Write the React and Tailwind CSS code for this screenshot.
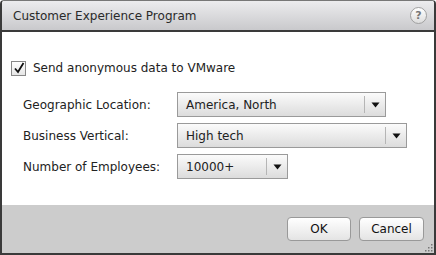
import React from "react";

const font = { fontFamily: '"DejaVu Sans", Verdana, sans-serif' };

const Select = ({ value, width }) => (
  <div
    className={`flex items-center h-[25px] border border-[#9a9a9a] bg-gradient-to-b from-[#fbfbfb] to-[#dcdcdc] ${width}`}
  >
    <span className="flex-1 pl-[8px] text-[12px] text-[#222]">{value}</span>
    <span className="w-px h-[17px] bg-[#b5b5b5]" />
    <span className="w-[20px] flex justify-center">
      <svg width="9" height="6" viewBox="0 0 9 6">
        <path d="M0.5 0.5 L8.5 0.5 L4.5 5.5 Z" fill="#111" />
      </svg>
    </span>
  </div>
);

const Row = ({ label, children }) => (
  <div className="flex items-center h-[25px]">
    <span className="w-[154px] text-[12px] text-[#222]">{label}</span>
    {children}
  </div>
);

export default function App() {
  return (
    <div className="w-[436px] h-[255px] bg-white" style={font}>
      <div className="h-full flex flex-col border-2 border-[#3a3a3a] border-t-[#777] border-t rounded-t-[4px] overflow-hidden">
        <div className="h-[31px] flex items-center justify-between pl-[11px] pr-[7px] bg-gradient-to-b from-[#ececee] to-[#c9c9cc] border-b-2 border-[#3a3a3a]">
          <span className="text-[12px] text-[#2a2a2a]">Customer Experience Program</span>
          <span className="w-[17px] h-[17px] rounded-full border border-[#a0a0a0] bg-gradient-to-b from-white to-[#ddd] flex items-center justify-center text-[11px] font-bold text-[#777] leading-none">
            ?
          </span>
        </div>
        <div className="flex-1 bg-white pt-[27px] pl-[9px]">
          <div className="flex items-center gap-[7px]">
            <span className="w-[15px] h-[15px] border border-[#888] bg-gradient-to-b from-white to-[#e6e6e6] flex items-center justify-center">
              <svg width="12" height="12" viewBox="0 0 12 12">
                <path d="M2 6.5 L5 10 L10.5 1" stroke="#111" strokeWidth="1.8" fill="none" />
              </svg>
            </span>
            <span className="text-[12px] text-[#222]">Send anonymous data to VMware</span>
          </div>
          <div className="pl-[12px] mt-[15px] flex flex-col gap-[6px]">
            <Row label="Geographic Location:">
              <Select value="America, North" width="w-[209px]" />
            </Row>
            <Row label="Business Vertical:">
              <Select value="High tech" width="w-[230px]" />
            </Row>
            <Row label="Number of Employees:">
              <Select value="10000+" width="w-[111px]" />
            </Row>
          </div>
        </div>
        <div className="h-[48px] bg-[#cccccc] flex items-center justify-end gap-[8px] pr-[10px] relative">
          <button className="w-[64px] h-[24px] rounded-[4px] border border-[#999] bg-gradient-to-b from-white to-[#e4e4e4] text-[12px] text-[#111]">
            OK
          </button>
          <button className="w-[65px] h-[24px] rounded-[4px] border border-[#999] bg-gradient-to-b from-white to-[#e4e4e4] text-[12px] text-[#111]">
            Cancel
          </button>
          <svg className="absolute right-[1px] bottom-[1px]" width="8" height="8" viewBox="0 0 8 8">
            <rect x="6" y="0" width="1.5" height="1.5" fill="#777" />
            <rect x="3" y="3" width="1.5" height="1.5" fill="#777" />
            <rect x="6" y="3" width="1.5" height="1.5" fill="#777" />
            <rect x="0" y="6" width="1.5" height="1.5" fill="#777" />
            <rect x="3" y="6" width="1.5" height="1.5" fill="#777" />
            <rect x="6" y="6" width="1.5" height="1.5" fill="#777" />
          </svg>
        </div>
      </div>
    </div>
  );
}
